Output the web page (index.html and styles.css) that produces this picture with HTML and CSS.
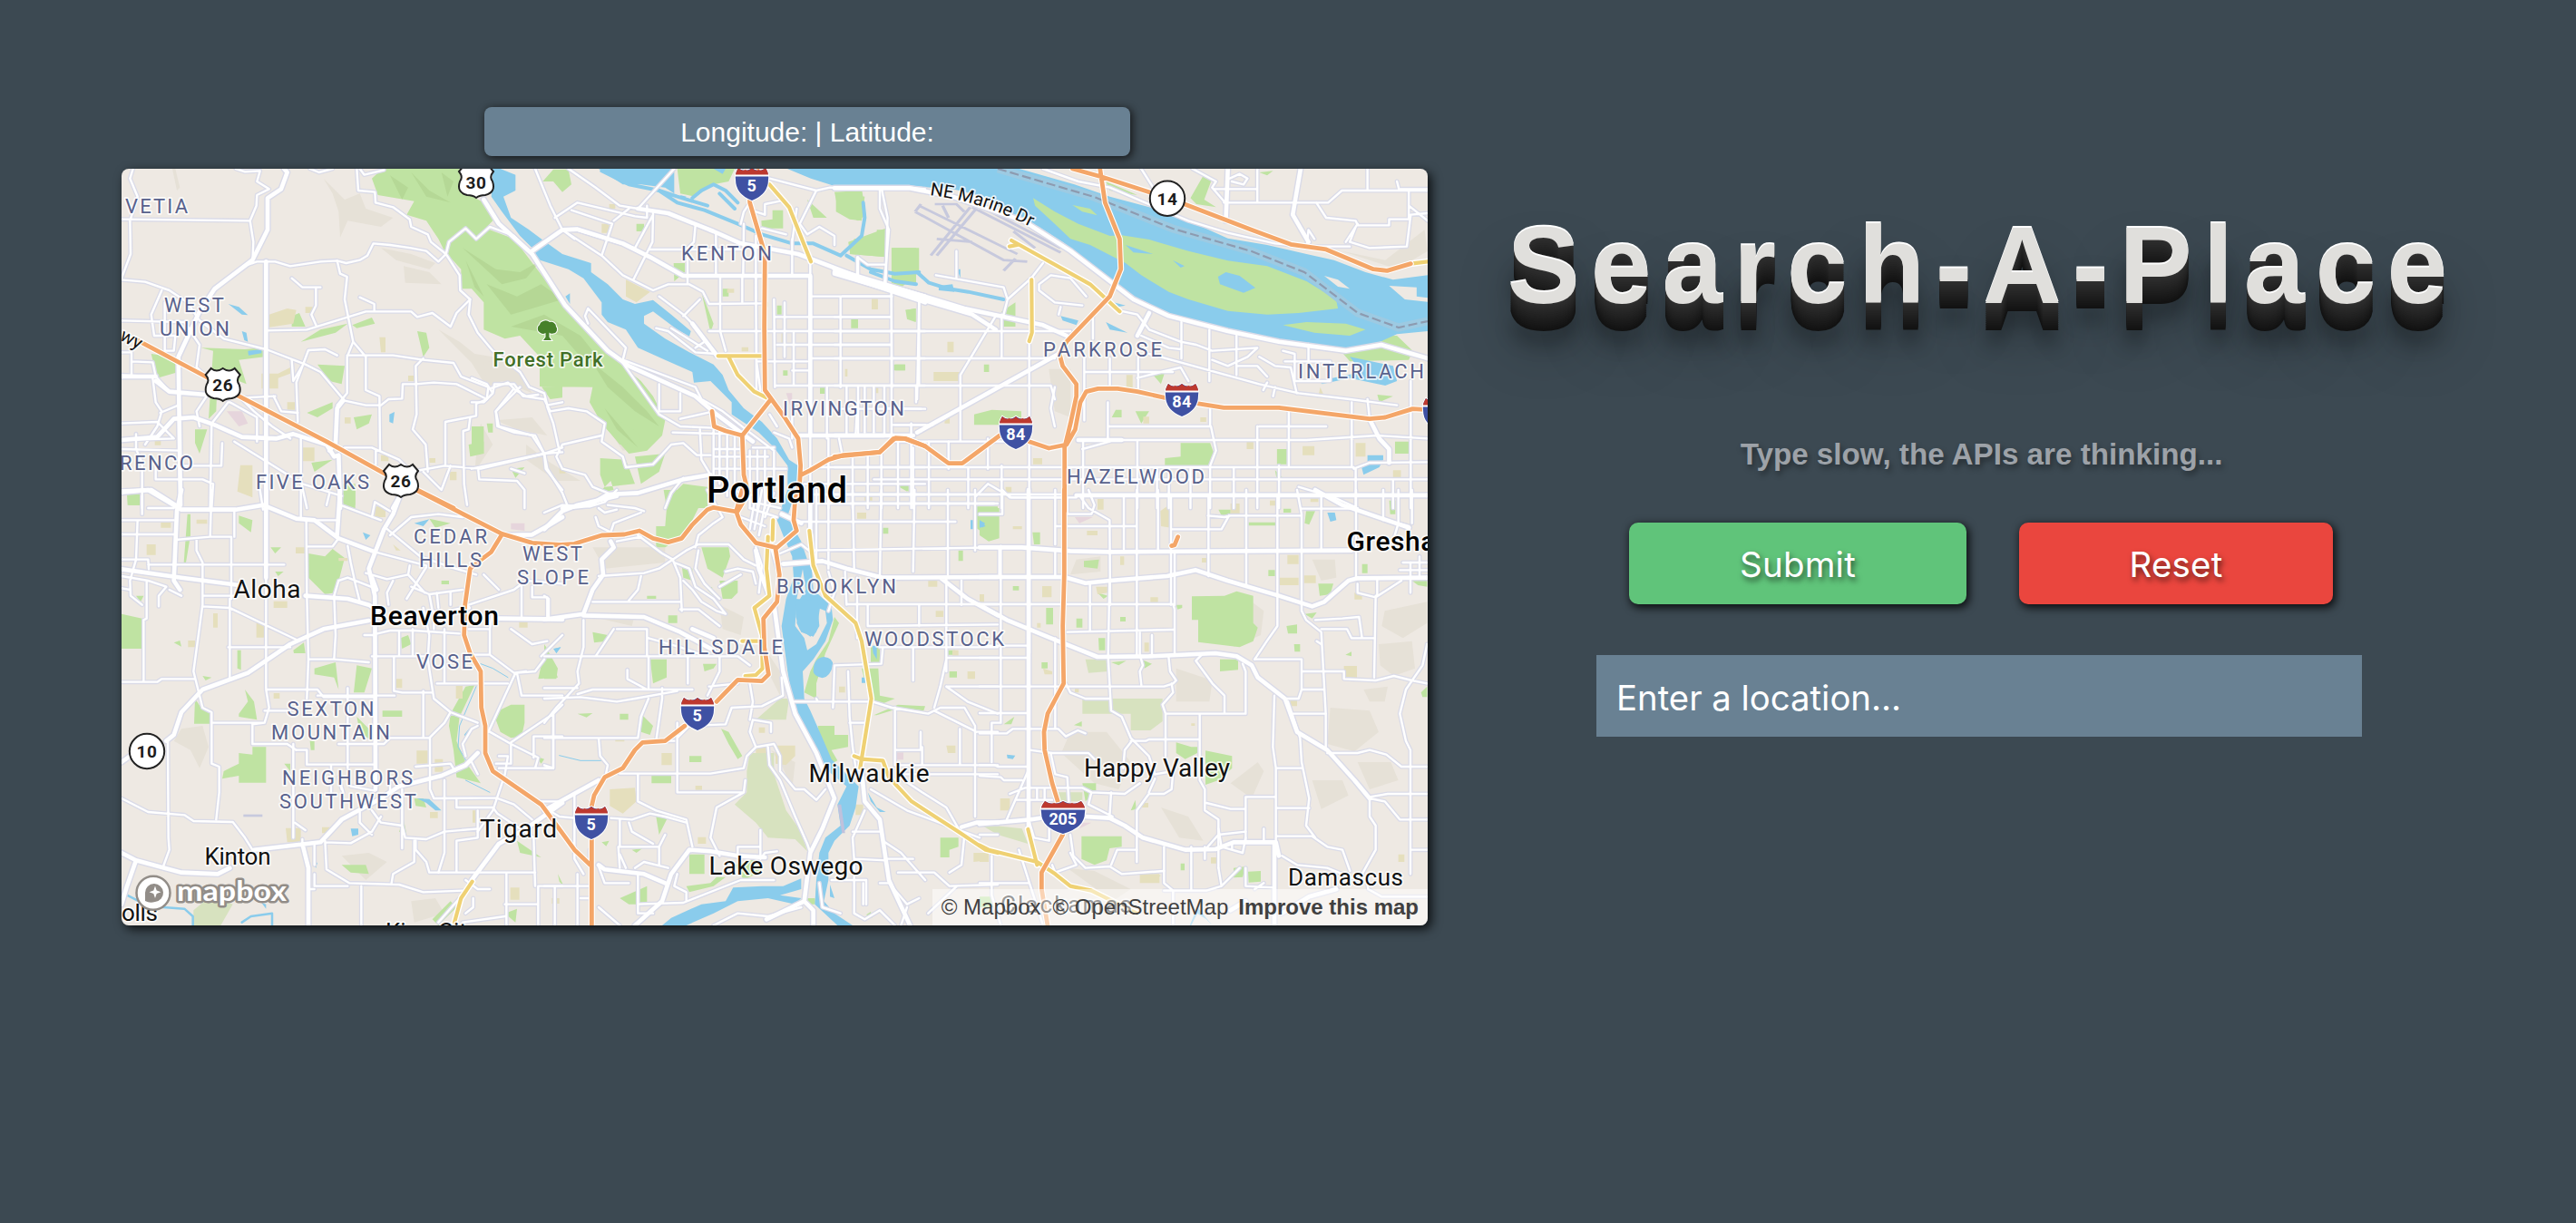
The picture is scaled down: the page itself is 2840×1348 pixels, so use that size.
FILE: index.html
```html
<!DOCTYPE html>
<html lang="en">
<head>
<meta charset="utf-8">
<title>Search-A-Place</title>
<link rel="stylesheet" href="styles.css">
</head>
<body>
<main class="page">
<section class="map-column">
<div class="coordinates">Longitude: | Latitude:</div>
<div class="map">
<svg class="map-canvas" viewBox="134 186 1440 834" role="img" aria-label="Map of Portland">
<defs>
<g id="minor" class="net">
<g transform="translate(120 100) scale(.33333)">
<path d="M80,258 70,290 95,350 70,430 72,540 42,620M42,425 465,430M420,258 450,268 500,265 490,300 530,325 490,345 488,380 467,430 478,500 475,570M42,625 120,632 200,660 260,700 300,760 380,820 520,855 650,905 700,930 780,1025 850,1040 900,1040 925,1020 970,1018 972,970 1015,970 1075,965 1150,970 1250,1020"/>
<path d="M445,580 490,565 550,565 600,580 700,565 755,562 785,570 830,560 855,545 875,505 930,510 1000,520 1050,530 1090,565 1115,540 1160,610 1162,660 1195,690 1190,740 1220,800 1270,860 1360,930 1390,980 1440,1000 1450,1040 1500,1030M1115,540 1125,500 1180,455 1215,490 1260,450 1340,480 1390,530M820,258 825,330 880,335 882,370 940,385 995,425 1000,450 1055,475 1065,500 1115,540M665,258 695,270 740,258M830,258 845,278 910,262"/>
<path d="M755,562 765,605 788,615 780,690 808,830 788,880 788,1000 755,1040M520,793 655,790 850,730 1000,730 1020,748 1070,735 1130,780 1150,735 1195,690M605,620 640,650 700,650M685,655 685,710 670,740 685,775M830,683 878,705 878,725M808,830 850,880 850,990 895,1010 897,1190M788,875 940,875 1040,890 1140,900 1165,945 1255,980 1250,1020 1215,1035 1215,1075 1113,1095 1113,1235M755,875 715,855 660,858 620,965 625,1095M1040,885 1015,910 1018,1070 1005,1120 1048,1170 1055,1260M605,890 610,960 640,910"/>
<path d="M42,760 250,765 300,840 290,915 340,960M42,865 75,865 75,940M75,895 145,898 155,945 42,940M155,945 200,995 330,1005M175,660 140,740 150,810 220,810 215,860 185,860 185,700M145,950 155,1030 175,1060 160,1110 120,1170M42,1100 160,1095 215,1150 42,1155M170,1065 230,1040M300,1110 290,1060 330,1000M395,1030 340,1100 335,1380M400,1030 490,1080 490,1160M430,1010 480,1060 540,1110 600,1150M42,1185 235,1190M90,1135 90,1185 110,1230 110,1380M415,1160 560,1250 640,1300 770,1340M375,1165 372,1240 235,1240M155,1240 155,1285 310,1285 345,1300 340,1380M635,1150 635,1290 655,1380M780,1180 870,1180 960,1220 1000,1260 1110,1240 1230,1250 1440,1200 1500,1195M1195,1080 1190,1120 1172,1125 1175,1300 1185,1370M1130,1240 1100,1320 1040,1260M883,1190 883,1235M545,1010 570,1060 625,1065M450,1015 550,1010M1340,985 1280,1060 1285,1110 1340,1130 1410,1140 1440,1200 1445,1250 1500,1320M1222,1255 1225,1285 1350,1290 1375,1320 1375,1380M1260,985 1320,965 1345,990 1380,1010 1420,1005M1450,1045 1470,1100 1490,1190"/>
</g>
<g transform="translate(520 100) scale(.33333)">
<path d="M210,258 260,380 300,460 430,545 500,610 600,660 650,640 720,640 765,665 785,705 970,703M320,258 410,320 490,380 550,390 670,258M275,420 350,370 540,415 580,420 580,380M330,395 465,440 430,545M300,460 340,490M345,460 540,520 600,410M470,430 520,390M740,445 735,500 715,520M600,405 598,500 535,625M590,525 900,525M808,470 808,612M714,520 714,640M900,440 898,612M940,480 940,690M1060,490 1060,612M1075,390 1060,500M890,440 900,400 920,370M985,290 1140,330 1185,320 1350,322 1450,320 1500,325M1140,330 1085,440 1110,475 1150,450 1200,480 1200,510M1350,325 1350,390 1380,460 1365,640M1275,610 1275,550 1310,575 1365,575M940,400 970,410 970,375 1020,365M960,455 1040,475"/>
<path d="M822,612 822,790M895,612 895,700M940,612 942,990M1000,690 1003,980M1035,700V880M1065,800 1065,975M1120,565V1380M1220,680 1220,980M1388,650 1390,980M1480,700V970M1120,680H1390M1005,748H1388M822,795H1500M1010,840H1388M1120,885H1500M1060,925H1112M1003,975H1500M942,895H1110M1175,980V1150M1240,980V1140M1300,980V1130M1365,980V1140M1470,980 1470,1030M1400,1105H1500M1275,1050 1270,1140M1060,1050 1060,1150M785,795 822,795 840,860M942,795 942,895 955,990M1375,1050 1500,1052"/>
<path d="M385,720 510,850 500,890 740,980 760,1020 830,1060 920,1130 1000,1190M385,720 375,745 385,770M620,680 700,740 730,770 810,870M700,745 755,690M610,785 650,795 740,865 810,870M660,785 780,860M740,850 770,830M500,900 620,1070 690,1110 800,1115M620,970V1060H690V1000M690,1085 800,1060M665,1130 860,1135M755,1120 760,1220 790,1270M800,1185H890M800,1210H980M800,1250H1040M800,1120V1300M820,1120V1300M845,1120V1340M870,1120V1340M920,1190V1380M945,1190V1380M970,1190V1380M1000,1190V1300M930,1180H1000M1120,1245H1500M1100,1300H1500M1130,1335H1500M1180,1150V1380M1215,1150 1225,1200M1260,1210V1380M1310,1200V1380M1355,1190V1380M1410,1150V1380M1460,1180V1380"/>
<path d="M0,950 50,970 70,1000 40,1030 0,1030M70,1000 75,970 140,970 170,1010 240,1020 260,1060 320,1050 380,1060 440,1100 430,1160 500,1210 510,1245 600,1235 660,1170 700,1165 745,1205 790,1205M430,1140 300,1170 280,1210 300,1250 375,1270 400,1310 450,1330M0,1250 240,1200 300,1180M160,980 80,1060 90,1110 200,1140 240,1200 250,1250 300,1330 320,1380M130,1250 175,1265M700,1280 660,1330 640,1380M1000,1130 1050,1150 1060,1180M985,1070 1010,1110"/>
</g>
<g transform="translate(920 100) scale(.43367 .33333)">
<path d="M530,258 620,300 700,320 790,370 900,430 1000,470 1120,505 1200,515 1310,515M780,258 810,320M910,258 970,300 960,320 990,365M965,325H1075V258M1075,325V370M990,370H1255L1290,330H1508M1355,258V330M1225,370 1250,420 1325,430 1330,445H1410V425H1460V330M1325,450 1310,500 1360,520 1455,515 1465,410 1508,405M1430,300 1435,325 1508,325M1005,290 1030,275 1050,290 1040,310 1010,300M1460,380 1508,430M1200,520 1205,460 1220,490M1330,440 1300,500"/>
<path d="M60,550V610M120,325 135,420 130,640M258,610 430,650 440,690 430,740M310,530V620M440,690 500,620 530,570M520,640 520,660 560,700 630,710M520,640 550,610 600,620 640,680M575,715 570,740M145,670V1150M215,700 210,1020M20,680H145M0,748H145M0,795H600M0,840H145M0,885H560M0,975H500 550L560,1020M60,980V1140M100,980V1130M0,1052H220M145,1105H250M145,1130 148,1160H500M320,940V1160M425,740V880M412,740 320,940M495,830V1380M657,740V820M635,880V1090M700,885V985M772,880V990M635,930H860M882,765V885M953,790V960M1022,810V940M780,810 850,850 882,855M735,730 770,740 800,790 880,830 920,840 960,860 1075,850 1050,880 1000,910 960,890M1022,910H1075L1100,945M770,950 830,930 880,915 900,960M800,870 1080,970 1180,1000 1310,1020 1430,1040M1100,965 1090,990M1120,980 1115,1010M1205,840V890M1145,895H1260V960H1170V870L1140,860M1080,880 1120,910 1160,915 1175,1000"/>
<path d="M695,1030V1150M695,1110H955V1050M957,1110 970,1190 955,1240M1080,1110H1250M1075,1110 1075,1380M1155,1050V1240M1315,1030V1240M1355,1020 1360,1080M1465,960V1380M635,1155H1080 1200L1380,1140 1508,1150M770,1155V1380M632,1160V1380M390,1250V1150M195,1100V1380M240,1160V1380M290,1160V1250M340,1250V1380M425,1240V1380M0,1245H1320M100,1285H1508M0,1335H350M630,1335H1508M390,1300 450,1345H580M360,1340 390,1300M820,1250V1380M850,1250V1380M905,1250V1380M955,1250V1380M1015,1245V1380M1130,1240V1380M1180,1310 1270,1345 1330,1380M1325,1250 1325,1380M1320,1250 1360,1230 1508,1228M1420,1290V1380M40,1365H405M630,1185 700,1160M560,980 550,1050 560,1110"/>
</g>
<g transform="translate(120 540) scale(.33333)">
<path d="M42,100H215M42,147H215M95,100 90,230 70,300 72,350 110,380M130,60H215M42,230 130,230 132,262M110,20V80M340,0 335,155 220,165M415,65V155M335,155H405V360M290,165V200L310,240 310,380 280,600 310,720 340,735 340,905 365,915 365,1000 355,1090M130,247H580M165,385V350L190,320 130,300 42,285M42,325 70,330M125,300V425L115,430V635M42,635H160L175,625H285M310,350H415M200,330 240,350M310,385 400,390 620,495M400,360V625M395,520H600M520,80V660L530,720 515,770H340M520,660H690L710,685H880M515,730H600M475,770V840H590L620,860M515,770 475,775M635,0V95M653,100 655,350 660,560 655,690M660,187H740L760,160M790,185 800,240 815,310 830,370M745,350 760,300 790,290 880,325M690,100H760M510,65 500,0M720,50 730,10M765,50 900,100M870,90 880,40 930,70M915,125 1030,220 1130,255 1215,280M880,205 1050,250M930,150 1000,90 1090,80 1170,90M850,275 920,295 990,280 1045,340M990,280 995,250M940,300 920,340 925,380M1050,255 985,360M1000,320 1060,345 1170,330M1085,340 1090,390M1130,340V380M1060,345 1070,400"/>
<path d="M1190,380 1340,330 1380,300 1500,310M1240,280 1290,330M1365,310V420M1400,320V355H1450V420M1190,460H1260L1270,400M1260,460V545L1340,605 1380,600M1190,545H1260M1430,550 1500,480M1330,460 1400,510 1450,500M1440,560 1410,600 1350,605 1365,680H1500M1345,605 1255,800M1085,640H1320M1040,390 1060,480 1055,560 1075,690 1130,735 1220,770M960,470V545M1005,460V545M845,480H880M888,475 930,465 1010,465 1160,475M1075,460V400M1110,460V635M870,550H1010 1055M943,550V665L970,670H1070M1040,665V820M690,680H945M660,560 745,560 860,570M745,350 750,480 745,560M790,655V920M620,860H655V908H880M610,840V1150M735,910V1000M760,840H910L930,820H1060L1110,770 1130,735M1062,820V990L1075,1020 1285,1018M1110,960V1200L1090,1265M1015,915 1130,905 1145,930M1280,905H1330V840M1260,800 1330,840 1420,885 1410,920 1290,920M1330,835 1470,740 1500,710M1405,885 1405,815H1500M1470,740V920H1410M1290,880 1320,880 1310,940 1270,1060 1220,1130"/>
<path d="M1200,900 1220,940M1180,880 1170,840 1200,790 1220,780M1150,1025V1050H1270L1285,1070 1405,1150 1410,1310M1220,1060 1220,1150 1150,1160V1265M1285,1020 1340,1040 1400,1090M1410,1030H1500M970,990V1185M870,1060 900,1100 970,1110 980,1150 1050,1155 1110,1130 1220,1120M1015,1160 1015,1190 1050,1230 1060,1265H1410M1010,1160V1230L940,1270 935,1300M640,1155V1180M680,1170V1240M715,1160 720,1255 795,1300 960,1305 1040,1330 1170,1325M715,1165 800,1168 870,1130 900,1080M680,1270V1310H790M835,1310V1440M660,1320H680M830,1065 830,1100 870,1140M42,1020 130,1065 250,1075 280,1095 410,1098 450,1150 475,1190M195,830 197,1150 200,1190 180,1245M615,1100 650,1125M775,1000 760,950 770,990M800,980 880,995M930,960V1000M1315,1270V1440M1310,1370H1420M1420,1310 1420,1440M1420,1310H1500M1205,1350V1380L1180,1400M1180,1290 1220,1320 1260,1320M1170,1430 1310,1410M1090,1430 1160,1350"/>
</g>
<g transform="translate(600 540) scale(.33333)">
<path d="M0,75 60,50 150,55 200,40 240,0M180,60 200,75 240,65M170,90 180,120 220,140 230,110 320,75M210,50 300,60 330,70M240,170 320,155M310,150 390,210 425,230 470,200 510,180 610,180 660,230 700,250M425,230 380,260 330,275 180,285M425,230 450,290 455,400M430,240 480,260 500,320 560,360 600,410 570,400 520,370 490,330 460,300M510,200 500,260 530,310 580,360M540,0 590,90 560,110 510,150 500,190M600,270 640,260 690,270 700,310M580,320 650,280M160,370H450M320,285 310,330 280,365M0,350 15,360V420M450,395H510L580,450M0,550H640L680,580M130,430 130,520 110,600 115,640 40,720 0,770M240,460H340V550M345,490 450,520 520,545M475,550V640M170,550 230,460M345,550V660M0,655H110M110,675 160,660H490M0,690 120,685 240,700 300,690 440,665M390,655V690L370,830M275,595V625L340,660M580,550V600L540,680M545,650 640,640M0,820 100,820 180,820 185,880 210,910 200,960M30,740V920H0M150,820H310L320,750 345,690M0,910 30,920"/>
<path d="M440,770V1000H660L665,960M250,938H550L660,920 670,880 700,850 680,800 690,760 750,770V800M310,940V1030L370,1060 470,1090 490,1180M440,820 480,780 600,775 620,720 720,715 790,680 785,620M680,640 690,700 680,760M700,850 760,840 780,880V930L830,990 860,990 900,1025 930,990M740,850 745,910 780,960 830,1080 870,1170 880,1200M370,830H430M220,1085 290,1090 350,1070 400,1080 470,1100M280,1100 290,1130 360,1170M250,1090V1180H380L400,1140M245,1180 250,1250M660,1000 570,1050 550,1150 580,1210M715,1125V1220M640,1180H710M640,1180V1215M715,1220 730,1200 770,1195M100,1010V1220L130,1270M0,1050 50,1080 100,1085M0,1310H150M110,1270V1440M35,1310V1440M120,1350H150M180,1380 250,1440M180,1245 200,1300 280,1300M250,1205 270,1250M300,1250 330,1230 410,1250M310,1270V1400H360M310,1370 460,1365 650,1290 760,1290M440,1270 430,1310 470,1330 470,1360M560,1440 640,1400 740,1410 850,1380M150,1190V1235M380,1180 380,1240"/>
<path d="M780,210 850,180 900,220M900,0V240M940,0V260M1020,0 1025,260M1115,0 1110,290M1225,0 1220,270M1335,0V280M1425,0V200M900,45H1500M840,105H1360M880,200 1500,190M900,15H1500M940,270 960,340 940,400M995,270 1000,380M1035,290V490M1070,380V450L1500,445M1000,378H1500M1240,380 1240,450M1330,290V600M1380,300V380M1110,520H1500M1220,520V630M1330,560 1310,650 1290,720M1120,520 1115,575 960,580 955,720M1330,555H1500M1085,700 1150,720 1270,740 1310,720 1390,720 1425,780V1080M1330,650H1500M1330,650 1400,700 1500,740M820,700H1080M1005,600 1010,750 1020,850 1035,950M1010,770H1060M900,690 905,700M1160,720V860H1245V800M1250,850V910M1160,910H1500M1430,800H1500M1290,730 1430,800M1375,790V910M1160,860 1160,910M1190,960 1250,1000 1330,1050 1370,1120M1180,940H1500M1080,990 1200,1060 1440,1150M1060,1060 1020,1150 1025,1220 1130,1225M1020,1130H1110M1025,1220V1400L1060,1420 1110,1390 1160,1440M950,1290H1065V1370M1055,1300V1370M1120,1160 1180,1200 1260,1290M1130,1220H1220M1170,1265H1290L1340,1310 1500,1305M1365,1310 1270,1400M1140,1300 1200,1370 1240,1350M1200,1380 1180,1440M1110,1300 1140,1300M1390,1140 1380,1240 1340,1265M1440,1140 1500,1140M910,1300 920,1380 980,1400"/>
<path d="M620,0 700,20M680,60 770,90M690,40 780,60M700,10 680,130M720,0 695,130M740,0 710,150M760,10 730,90M650,90 730,120M700,190 720,250 710,340M750,190 770,260"/>
</g>
<g transform="translate(1080 540) scale(.33333)">
<path d="M0,80H75V0M70,185V540M0,15H270M75,0 100,25H320M165,200V540M65,190V290M0,378H640L645,395V540M250,0V180M255,120H520M0,45H50M290,25V80H370L380,50 360,0M335,25 360,60 430,100 432,380M477,25V195M520,0V550M590,0V200M633,25V380M635,130H800L825,85M755,85 810,90 830,85H1060M757,25V285M882,0V320M985,25 985,450 950,500 910,560M1050,0 1065,80 1065,400 1080,430 1130,470 1145,740 1145,855M1130,20 1130,200M1065,62H1230M1245,0V290M1335,0V100M1385,0V110L1370,160M1430,0V110M1385,110 1420,120M1300,20H1480M1400,240H1480M1390,265H1480M1455,220V290M250,290V200M645,205V380M365,305V465M430,300 425,550 435,730 470,750 500,820 560,880 580,940M290,470 640,462M530,470V545L540,580 530,600 535,645M570,480V545M0,515H165M0,555H165M0,650H610L640,640 650,630 630,600 625,550M635,640 640,670 605,710 615,740V880M0,738H155M70,400V650 770H40V900M0,805H90L110,790H260L285,815 325,795 350,805M285,640 300,670 350,690H430M250,490V790M650,545 770,540M735,545 715,565 770,640 810,680V740M615,740H880V600L870,575M728,740V960L745,990V1060L790,1090V1250"/>
<path d="M910,560H1065V660L1055,690 1015,690M1065,600H1205V625L1310,630 1370,615 1430,630 1480,640M1065,660H1140M1030,740H1145M1115,500 1130,510M1110,430 1200,425 1255,420 1265,490M1130,460H1215L1230,490H1305M1310,350 1305,620M1250,310 1250,340 1310,355 1395,300M1315,295V350M1425,240V340M1480,510 1465,580 1410,660 1390,740 1410,830 1425,860V1270M1150,870 1250,870 1290,860 1345,875 1395,915H1480M1290,1020 1340,1030 1390,1090H1480M1290,1015 1350,1005H1480M1290,1020V1080L1310,1110V1190L1265,1270M1430,1190H1480M980,920H1065M985,1145 1100,1145 1150,1180 1200,1190 1225,1260M980,1052H1090M880,1160V1015H980M750,1035 830,1055H880M975,680 970,850 980,920V1160M1020,700 1060,820 1065,900 1090,1020 1080,1110 1110,1150M500,830H550L560,825H725M500,835 480,860 475,920M580,940 640,930 635,990 610,1005H560L520,1060V1230M580,955 560,1000M435,1000 430,1080M370,1000 480,1005 530,970M370,1000 360,1040 440,1080M90,1090 160,930M0,910H50L60,915H155M0,945 70,950 80,960H140M100,1005 150,985H340L370,1000M120,1025H240M190,990V1020M215,990V1020M235,870 250,940 290,950 295,1030M165,860 240,870H360L380,890M165,1100 180,1150 230,1160V1100M300,1140 310,1210 350,1250 430,1245 470,1270 610,1260"/>
<path d="M520,1190H455L435,1240M610,1180V1300L640,1325V1440M640,1325H750L800,1310 790,1250M700,1180V1320M745,1180V1220M750,1185 790,1140 880,1130M790,1120 800,1180 870,1200 880,1150M940,1120V1165M835,1165V1190M610,1325 640,1325M880,1250V1310L975,1315M1000,1210 1050,1240 1150,1250 1250,1290M910,1320 940,1300M130,1190 165,1300 210,1440M0,1300H165M40,1210V1340L70,1440M300,1200 320,1240 250,1265 240,1240M1280,1280 1285,1320 1330,1345H1480M800,1310 860,1250"/>
</g>
</g>
<g id="major" class="net">
<path transform="translate(120 100) scale(.33333)" d="M580,258 590,270 570,325 525,355 525,460 475,560 350,655 300,730 230,880 237,1370M520,565V1380M42,1155 160,1145 215,1085 280,1080 350,1105 440,1145 555,1150 610,1135 720,1170 745,1210 760,1205 765,1380M775,1025 755,1050 750,1165 730,1190M155,945 42,945M155,960 200,995 320,1005M960,1345 940,1380M42,1325 140,1320 220,1370"/>
<path transform="translate(520 100) scale(.33333)" d="M40,360 90,440 200,540 310,710 450,860 520,910 740,1010 810,1070 930,1160M200,530 300,460 350,458 500,505 590,550 700,612 1120,612M550,390 650,405 800,465 890,505 1080,540 1290,620 1500,680M1200,600 1500,700M730,770 810,875M1120,612V1140M1085,1140H1365M300,1380 390,1370 450,1335 550,1330 700,1285 790,1270"/>
<path transform="translate(920 100) scale(.43367 .33333)" d="M0,322H190L300,350 480,430 600,530 760,690 850,745 1000,795 1130,830 1300,860 1390,840 1508,885M0,590 140,645 330,720 530,775 590,810M0,605 350,740 410,790M0,1140H200M210,1130 570,870M620,1155H730M1185,258 1165,410 1205,500M1000,258 995,430M1360,1085 1385,1150 1410,1185 1410,1230M800,735 770,810"/>
<path transform="translate(120 540) scale(.33333)" d="M42,8 130,0 240,65 420,65 510,50 620,95 680,100 760,160 880,205M240,0 225,70 215,300 235,330M520,0V290M765,0 755,150M970,0 940,80 910,130 860,260 880,350 882,990M42,262 240,290 430,315M650,350 790,360 860,380 890,400M860,432 710,460 600,510 460,605 310,660 240,735 215,810 190,830M70,880 42,900M1190,390 1140,400M1290,425 1500,428M1220,870 1180,910 1100,945 960,980 900,1020 770,1090 700,1165 480,1190M1500,1035 1380,1120 1290,1170 1200,1290M1300,150 1400,148 1450,120 1500,90M42,1200 90,1225 240,1265 360,1270 400,1250M90,1225 60,1310 42,1370M640,1170 660,1250V1440M870,290 885,330"/>
<path transform="translate(600 540) scale(.33333)" d="M0,130 60,70 110,50 240,20M220,170 230,190 190,230 195,280 160,330 130,410 0,428M130,415 330,420 450,470 560,530M560,490 490,460M760,380 790,600 830,740 900,870 960,1020 920,1120 880,1200 860,1360 735,1420M790,245 920,235 1000,260 1120,290 1500,288M880,0V140M1310,290 1400,360 1500,415M0,1060 180,960M180,1240 200,1255 330,1270 400,1300M300,1440 390,1360 420,1270 480,1190 550,1195 640,1210 730,1215M1050,930 1060,1030 1110,1090 1140,1290 1210,1440M860,1360 890,1390V1440M700,200 710,260 740,340M1380,1115 1430,1100 1500,1100M785,80 850,110"/>
<path transform="translate(1080 540) scale(.33333)" d="M0,190 140,190 300,202 430,205 1230,200M0,288H280L350,308 430,300 620,285 715,265 820,300 990,350 1100,385 1140,370 1220,300 1250,292 1480,290M0,380 90,430 260,500 390,552 560,550 780,540 850,550 900,580 920,620 1010,690 1050,800 1150,860 1240,960 1290,1020M162,0V1120M0,1105 170,1090 200,1085M350,1080 430,1085 480,1110 540,1150 680,1190 780,1188 840,1165 980,1165 990,1210M975,1165V1440M320,18 1480,18M1110,0 1200,50 1420,125M1000,1400 1090,1345 1180,1320M830,1390 880,1360"/>
</g>
<g id="trunk" class="net">
<path transform="translate(520 100) scale(.33333)" d="M985,310 1050,385 1122,565M815,877H960M850,880 880,940 935,995 985,1020"/>
<path transform="translate(920 100) scale(.43367 .33333)" d="M450,495 650,640 725,730M445,515 465,510M501,625 502,800 495,828M1465,572 1508,565"/>
<path transform="translate(600 540) scale(.33333)" d="M740,155 735,260 745,350 695,390 720,480 722,590 700,612 665,615M655,500H710M757,100 755,165M877,135 890,250 930,350 1030,440 1050,500 1082,690 1045,920M1025,880 1050,890 1120,895 1140,950 1215,1030 1370,1130 1460,1190 1500,1200"/>
<path transform="translate(1080 540) scale(.33333)" d="M0,1175 30,1190 190,1230 250,1270 300,1310 370,1325 430,1355 520,1400M160,1122 190,1240"/>
<path transform="translate(120 540) scale(.33333)" d="M1202,1295 1165,1350 1143,1430"/>
</g>
<g id="motorway" class="net">
<path transform="translate(120 100) scale(.33333)" d="M85,820 320,945 430,1010 720,1160 910,1265 1020,1320 1140,1380"/>
<path transform="translate(120 540) scale(.33333)" d="M1020,2 1300,145 1400,175 1500,182M1300,148 1265,205 1225,235 1195,260 1178,380 1175,480 1195,540 1230,600 1232,720 1245,780 1245,870 1270,930 1430,1040 1500,1135 1540,1190 1592,1240"/>
<path transform="translate(520 100) scale(.33333)" d="M945,258 918,330 920,370 970,540 968,780 970,990 1035,1080 1080,1150 1088,1240 1085,1300M990,1020 895,1140 900,1270 915,1330 880,1390M795,1060 802,1110 840,1125 895,1140M1090,1270 1120,1255 1180,1220 1230,1205 1350,1195 1395,1150 1430,1150 1500,1175"/>
<path transform="translate(600 540) scale(.33333)" d="M0,185 100,178 190,150 265,147 315,135 360,160 410,173 455,160 490,115 540,65 560,58 635,72 650,115 700,175 765,190M655,0 635,70M845,-20 830,30 825,100 835,135 765,195 778,280 770,370 725,425 728,520 742,610 720,632 640,628 570,700M465,780 400,830 325,835 300,860 260,920 200,950 165,1010 157,1045M157,1155V1440"/>
<path transform="translate(920 100) scale(.43367 .33333)" d="M0,1210 115,1195 155,1148 180,1150 230,1175 290,1232 325,1232 420,1140M495,1160 545,1182 590,1170 612,1120 625,1030 640,995 670,985 720,985 770,995 840,1015M925,1035 990,1048 1130,1048 1360,1085 1400,1080 1470,1052 1508,1055M675,258 688,370 725,490 728,590 700,680 590,830 572,870 580,910 615,970 615,1010 600,1100 585,1180V1390M605,258 680,285 800,335M890,375 1000,430 1060,460 1160,508 1250,525 1370,590 1405,595 1465,572"/>
<path transform="translate(1080 540) scale(.33333)" d="M280,0 280,280 275,450 278,640 225,740 213,800 215,860 240,970 262,1040M275,1140 205,1265 205,1320 225,1440M635,185 645,182 656,155"/>
</g>
<g id="interstate"><path d="M-15,-18Q-8,-12 0,-18Q8,-12 15,-18Q19,-12 18,-5Q18,11 0,18Q-18,11 -18,-5Q-19,-12 -15,-18Z" fill="#3f51a3" stroke="#fff" stroke-width="2" paint-order="stroke"/><path d="M-15,-18Q-11,-14 -7.500,-16Q-3,-14 0,-18Q3,-14 7.500,-16Q11,-14 15,-18Q18,-13 18,-10H-18Q-18,-13 -15,-18Z" fill="#bd392f"/><path d="M-18,-9.5H18" stroke="#fff" stroke-width="2"/></g>
<path id="us" d="M-13,-18Q-7,-13 0,-18Q7,-13 13,-18L19,-11Q14,-5 18,0Q22,12 10,15Q4,15 0,18Q-4,15 -10,15Q-22,12 -18,0Q-14,-5 -19,-11Z" fill="#fff" stroke="#222" stroke-width="2"/>
<path id="marine" d="M1025,215Q1082,222 1136,250"/>
</defs>
<rect x="134" y="186" width="1440" height="834" fill="#eee9e3"/>
<g class="shade">
<path transform="translate(120 100) scale(.33333)" d="M710,290 740,340 760,400 765,485 790,430 900,450 940,420 850,390 830,340 780,360ZM900,520 1000,540 1080,570 1060,590 950,560ZM975,580 1060,600 1100,640 980,635ZM1090,790 1160,830 1210,870 1270,880 1350,930 1400,1000 1300,960 1250,980 1200,900ZM210,258 225,330 235,320 220,258ZM1280,1090 1400,1080 1450,1140 1350,1120ZM1230,1100 1270,1170 1210,1260 1220,1150Z"/>
<path transform="translate(520 100) scale(.33333)" d="M180,1170 260,1230 360,1290 280,1290 180,1220ZM40,900 130,880 180,960 50,960ZM440,1100 560,1100 600,1170 500,1190Z"/>
<path transform="translate(600 540) scale(.33333)" d="M160,190 400,190 400,240 200,260ZM580,380 660,420 650,480 590,460ZM740,540 780,600 780,680 750,620ZM120,410 300,410 290,450ZM750,860 830,900 820,990 790,920Z"/>
<path transform="translate(920 100) scale(.43367 .33333)" d="M545,920 600,920 600,1080 560,1060ZM1290,530 1400,560 1500,460 1508,530 1430,590Z"/>
<path transform="translate(120 540) scale(.33333)" d="M240,790 310,780 330,850 300,920 270,860 215,830ZM770,1210 860,1200 920,1230 850,1290ZM1000,1360 1080,1350 1110,1400 1010,1430Z"/>
<path transform="translate(1080 540) scale(.33333)" d="M320,230 400,220 400,270 300,280ZM1100,230 1175,230 1180,290 1130,300ZM1340,400 1480,370 1480,440 1400,490 1330,450ZM1320,510 1430,500 1440,590 1370,615 1325,580ZM1160,720 1290,730 1320,800 1240,865 1150,840ZM1250,900 1360,900 1385,960 1290,990ZM1100,960 1200,960 1220,1010 1130,1055ZM600,1050 690,1080 740,1160 660,1150ZM830,970 920,900 940,930 900,1020ZM650,590 770,630 760,700 650,700ZM300,800 420,800 500,900 460,990 380,970 270,870ZM290,1250 380,1260 500,1320 440,1360ZM1270,660 1350,650 1340,700 1290,700ZM900,370 940,400 930,480 840,520Z"/>
</g>
<g class="soft-park">
<path transform="translate(600 540) scale(.33333)" d="M680,870 760,870 760,940 800,1060 850,1130 870,1195 830,1155 740,1150 700,1100 630,1040 670,1000 670,930ZM700,760 780,690 810,690 800,760Z"/>
<path transform="translate(1080 540) scale(.33333)" d="M340,690H605V765L565,795H500V740H340ZM350,560H425V600L360,605ZM0,1105 140,1120 160,1170 60,1140ZM250,1000H340V1030H260Z"/>
<path transform="translate(120 540) scale(.33333)" d="M280,1390 340,1340 410,1370 370,1440H280Z"/>
</g>
<g class="park">
<path transform="translate(120 100) scale(.33333)" d="M905,258H1160L1165,330 1240,370 1270,430 1215,485 1260,460 1340,490 1500,700 1580,790 1700,910 1760,960 1800,1010 1840,1090 1830,1140 1780,1190 1720,1200 1630,1100 1590,1030 1600,980 1425,978 1425,880 1360,810 1310,820 1240,790V700L1200,655H1165V590L1110,530 1090,490 1050,430 985,410 1010,365 890,345 870,290ZM1425,970 1500,970V1015L1460,1020ZM305,850 450,855 510,850 515,880 430,890 455,970 430,960 420,920 360,925 355,1060 330,1085 345,860ZM140,870 210,880 230,930 160,950ZM605,745 630,735 650,780 605,780ZM635,830 700,790 790,770 750,800ZM805,775 870,750 880,770 820,785ZM1020,795 1050,800 1060,850 1040,880ZM690,905 780,910 770,970 730,960ZM655,1065 740,1030 740,1050 690,1080ZM810,1080 870,1070 860,1100 820,1120ZM285,1120 325,1120 300,1200 285,1165ZM1190,1170 1240,1160 1240,1200 1195,1210ZM65,1330H110V1370H65ZM770,1300H815V1380H770ZM670,1230 740,1220 680,1260ZM1250,1100H1270V1130H1255Z"/>
<path transform="translate(520 100) scale(.33333)" d="M235,300 270,260 320,260 330,310 300,335 270,300ZM680,258H870L850,300 800,310 740,350 690,340ZM1205,335 1300,350 1290,430 1250,425 1205,400ZM1265,490 1340,485V460H1370V550L1250,540ZM1390,520H1470V640H1390ZM958,430 995,425 995,395H1030V455H960ZM760,665 800,770 790,800ZM830,655H850V680H830ZM1010,710H1025V740H1010ZM1255,755H1278V785H1255ZM1435,725 1468,720V765L1440,755ZM668,570H705V600L670,630ZM1110,360 1175,420 1130,420ZM1395,905H1433V925H1395ZM1152,980H1178V1002H1152ZM395,1030 470,1080 550,1130 560,1160 490,1170 440,1110ZM425,1215 510,1220 540,1300 440,1310 425,1270ZM640,1360 700,1300 780,1310V1380H650ZM420,1330 470,1320 460,1290ZM1400,1300 1445,1295V1325ZM540,1210 640,1200 620,1260 560,1300ZM545,440H570V465H545ZM0,1110H40V1200H0ZM1030,925H1045V942H1030ZM130,1250 175,1245 145,1280Z"/>
<path transform="translate(920 100) scale(.43367 .33333)" d="M0,335 70,330 80,410 60,430 10,400ZM35,500 130,455V550L40,540ZM145,520H215V600L170,650 145,650ZM180,725 207,720V765ZM425,730 460,700V780H425ZM355,1070 400,1055 475,1060V1105H355ZM880,1165H955L965,1200 955,1240H840V1215L880,1210ZM1390,810 1430,810 1470,860 1460,890 1310,895 1290,865 1380,840ZM905,355 940,275 960,290 940,360 970,385 920,375ZM690,300 770,345 700,330ZM155,905H180V925H155ZM715,1055H730V1080H705ZM810,940 840,930 830,970ZM1425,1160H1460V1200H1425ZM150,1300 185,1295V1325ZM765,1060 800,1060 780,1100ZM1120,1255 1140,1280 1125,1290ZM1125,1185H1150V1235H1125ZM1080,270 1115,265 1100,280ZM195,1165H203V1205H195ZM1380,1005 1420,1010 1385,1030ZM380,905H393V930H380Z"/>
<path transform="translate(120 540) scale(.33333)" d="M42,410 110,425V525H42ZM60,15H110V50H62ZM260,80H270V150L255,240 248,240ZM430,85 475,100 470,140 430,110ZM660,210 715,220 740,195 780,225 750,340 715,345 660,290ZM535,190 570,190 550,210ZM785,0H815V50L785,45ZM1060,95 1130,110 1080,125ZM475,850H520V968H430V945L375,955 380,930 430,905V870L475,875ZM285,690 305,720 335,735V773H282ZM430,740 460,700 450,660 480,700 490,760 430,750ZM1290,730 1330,710 1375,710V770L1365,815 1330,820 1295,800 1280,760ZM1445,515 1485,620 1420,625ZM1130,740 1180,650 1210,645 1160,750 1150,830 1180,900 1230,970 1150,950 1140,860 1125,780ZM905,730H970V750H905ZM820,580 870,590 845,670H810ZM680,590 750,570 760,660 745,620 680,610ZM770,1240 850,1240 860,1270 800,1265ZM1350,1160 1430,1215 1360,1200ZM1310,1400 1350,1385 1345,1430ZM1070,1420 1130,1360 1150,1380 1090,1440ZM610,530 645,505 650,540H612ZM425,530H437V595L425,590ZM965,490 990,480 1000,510 970,525ZM215,505 235,498 240,518ZM960,1130 975,1090 985,1140ZM90,350 115,350 105,370ZM310,615 340,620 320,630ZM580,905H600V930ZM665,830H680V860H668ZM1410,880 1440,890 1430,905ZM1010,1020 1040,1020 1050,1050 1015,1045ZM820,750 860,790 870,830 830,800ZM1100,300H1125V312H1100ZM550,270 578,270 560,285Z"/>
<path transform="translate(600 540) scale(.33333)" d="M395,0H540L490,100 450,160 400,190 370,190V120H400L405,60ZM0,510 45,590 40,625H0ZM160,470 210,480 205,500 165,505ZM350,560H405V620L360,640ZM410,415H440V440H410ZM520,190 610,190 615,220 590,290 540,260ZM580,300 640,300 640,340 620,360 590,360ZM455,250 490,260 490,300 460,290ZM905,780 960,780V810H1005V850L950,860 970,895 950,905 915,850ZM960,420 975,440 930,540 900,640V690L860,670 880,600 900,560 940,500ZM1050,590 1105,590 1110,680 1160,690 1110,710 1075,690ZM1090,745 1170,710 1260,715 1255,730 1180,720 1100,745ZM1080,520H1110V570H1080ZM1425,55H1500V140L1450,140 1420,120ZM1310,1150H1370V1180L1340,1190V1215H1310ZM480,1205H530V1270H480ZM470,1310 550,1300 570,1280 600,1280 560,1310 480,1330ZM630,1240 700,1220 720,1260 660,1290ZM585,790 610,800 655,880 640,890 610,840ZM480,880H520V900H480ZM395,870H420V900H395ZM320,740 360,780 350,810 320,800ZM355,945 420,940V970H355ZM110,740 160,738 140,752ZM250,1350 340,1310V1370L280,1370ZM370,1080 380,1060 410,1080 380,1140ZM250,740H278V760H250ZM1370,200H1385V235H1370ZM340,350H370V360H340ZM525,575 570,575 560,590 530,600ZM1330,530H1360V545H1330ZM1065,1405 1080,1395 1085,1415ZM45,1270 65,1310 50,1295ZM290,1190 325,1185 305,1200ZM190,1165 215,1160 205,1178ZM540,330 555,320 560,350ZM870,1350H895V1370H870ZM920,1290 895,1370 900,1310ZM1120,125H1138V145H1120ZM1340,600H1365V620H1340ZM800,520 805,600 820,600Z"/>
<path transform="translate(1080 540) scale(.33333)" d="M0,60H65V160L30,170 0,150ZM702,352 810,350 850,335 905,350V440L920,455 905,500 860,520 723,503V430H702ZM790,65H830V80L800,85ZM1120,310 1170,310 1160,345 1125,350ZM345,235 395,230 390,260 345,255ZM220,390H243V445H220ZM320,425H340V455H320ZM393,490H415V530H395ZM465,420H483V435H465ZM795,560H855V595L795,600ZM650,835 700,850 720,850V870L680,890 650,870ZM747,862 835,880 835,920 790,960 747,975 747,920ZM337,1145H470V1180L430,1185 420,1225 380,1240 337,1220ZM840,1250 880,1245 870,1280 840,1282ZM888,1262 930,1260V1295L890,1298ZM1265,245H1283V275H1265ZM1430,300 1480,290V320L1450,315ZM1015,450 1050,445 1050,475 1020,475ZM1040,510 1060,510V535H1042ZM890,107H980V118H890ZM1080,70H1110L1090,115 1075,110ZM1355,35H1375V80H1358ZM435,570 485,565 460,580ZM535,560 570,575 545,590ZM1075,410 1115,405 1100,425ZM1210,545 1230,535V550ZM1460,670 1480,650V685H1465ZM80,775 115,750 105,775ZM340,970H385V1000L350,1030ZM500,1060 515,1025 518,1055ZM665,1235H678V1258H665ZM390,340 425,350 410,360ZM205,570H225V590H205ZM650,380 670,380V390L655,395ZM955,265H977V285H955ZM0,1345H45V1380H0ZM312,778 338,765V782ZM1005,62H1030V75H1005ZM550,1270 600,1275 560,1290ZM110,318H130V332H110ZM175,140H200V180H180Z"/>
</g>
<g class="hill">
<path transform="translate(120 100) scale(.33333)" d="M1000,270 1060,330 1130,370 1050,350ZM1170,520 1280,590 1360,600 1430,560 1380,620 1300,640ZM1250,640 1350,680 1430,640 1500,690 1400,720 1330,740ZM1330,780 1440,740 1560,810 1640,910 1560,880 1500,810ZM1180,560 1240,680 1210,650ZM1600,900 1700,980 1780,1060 1820,1110 1740,1060 1650,980ZM1640,1050 1700,1120 1750,1180 1680,1120ZM1100,270 1140,300 1120,350ZM930,280 990,320 970,360Z"/>
</g>
<g class="school">
<path transform="translate(120 100) scale(.33333)" d="M530,740 590,720 620,725 610,770 530,782ZM650,715H680V735H650ZM895,815H915V865H900ZM505,935H560L600,915V935L560,950V985H505ZM435,1238H475V1345L425,1325ZM640,1180H680V1225H640ZM590,1030H615V1055H590ZM1060,1215H1080V1230H1060ZM990,942H1010V960H990ZM1128,1260H1150V1288H1128ZM152,1150H172V1172H152ZM780,1080H800V1100H780ZM900,1205H925V1225H900Z"/>
<path transform="translate(520 100) scale(.33333)" d="M510,625 590,665 545,700 510,680ZM430,440H455V470H430ZM1323,688H1343V723H1323ZM893,848H915V862H893ZM1025,800H1035V835H1025ZM1325,980H1345V1000H1325ZM1300,1340H1325V1355H1300ZM455,375H475V390H455ZM290,1250H310V1265H290ZM965,700H980V715H965ZM1235,920H1243V945H1235ZM845,655H868V668H845ZM1110,745H1120V785H1110ZM1070,1310H1085V1330H1070Z"/>
<path transform="translate(920 100) scale(.43367 .33333)" d="M96,690H110V723H96ZM287,830H303V865H287ZM742,940H758V985H742ZM505,1215H528V1235H505ZM1190,1175H1220V1205H1190ZM1325,1165H1350V1210H1325ZM785,1078H800V1100H785ZM1420,1255H1440V1280H1420ZM252,930H318V960H252ZM1048,1160H1065V1185H1048ZM280,1080H293V1100H280ZM435,1310H450V1345H435ZM1210,1340H1230V1360H1210ZM1235,980 1245,1010H1230ZM930,1080H945V1095H930Z"/>
<path transform="translate(120 540) scale(.33333)" d="M290,98H325V112H290ZM172,108H205V125H172ZM125,180H155V215H125ZM618,190H648V210H618ZM545,368H590V390H545ZM880,55H915V90H880ZM345,408H360V455H345ZM488,435H513V488H488ZM262,498H285V520H262ZM1357,435H1385V455H1357ZM1018,862H1055V905H1018ZM1078,890H1105V932H1078ZM585,1118H635V1165H590ZM1062,1065H1088V1085H1062ZM1203,1060H1225V1100H1203ZM705,1115H735V1135H705ZM1148,648H1170V690H1148ZM1328,1315H1358V1355H1328ZM950,625H970V655H950ZM75,0H100V12H75ZM545,672H565V690H545ZM760,225H790V235H760ZM940,180 965,200 950,200Z"/>
<path transform="translate(600 540) scale(.33333)" d="M217,990 300,985 305,1030 260,1070 217,1045ZM765,845H830V880L800,910 765,905ZM700,850H745V870H700ZM388,870H422V910H388ZM1030,1040H1055V1075H1030ZM500,978H522V992H500ZM1330,845H1360V870H1335ZM1400,600H1425V625H1400ZM1350,530H1370V548H1350ZM1420,1200H1470V1225L1420,1230ZM1035,75H1065V95H1035ZM235,815H265V832H235ZM508,1148H535V1170H508ZM25,1350H50V1368H25ZM710,785H730V803H710ZM1270,300H1300V320H1270ZM1295,400H1320V420H1295ZM975,650H995V670H975ZM1440,345H1455V375H1440Z"/>
<path transform="translate(1080 540) scale(.33333)" d="M598,70 633,45V125L600,120ZM830,45H860V80H830ZM1018,215H1055V245H1018ZM990,290H1055V315H990ZM1073,283H1112V308H1073ZM207,318H238V355H207ZM385,320H425V340L390,345ZM1205,582H1248V622H1205ZM1240,340H1265V362H1240ZM565,355H590V372H565ZM735,225H750V240H735ZM545,505H560V535H545ZM390,30H410V65H390ZM465,220H478V248H465ZM355,135H390V150H355ZM110,120H140V130H110ZM68,1020H100V1060H68ZM530,1270H595V1300H530ZM1385,1205H1405V1230H1385ZM765,1215H783V1235H765ZM315,650H328V670H315ZM700,772H712V780H700ZM1025,695H1050V715H1025ZM210,590 240,600V610H215ZM960,35H978V52H960ZM0,1200H30V1230H0ZM1420,1360H1450V1380H1420ZM190,440H202V455H190ZM530,1035H558V1050H530Z"/>
</g>
<g class="runway">
<path transform="translate(920 100) scale(.43367 .33333)" d="M205,400 430,560 490,565M215,380 465,540M205,400 220,375M370,375 260,545M345,385 245,545M350,385 575,535M375,385 575,520M455,465 510,520M430,595 460,555M260,490 350,500M275,380 290,420M255,375H310L330,400"/>
<path transform="translate(120 540) scale(.33333)" d="M445,1077H508"/>
</g>
<g class="mall"><path transform="translate(120 540) scale(.33333)" d="M1330,110H1375V135L1330,130Z"/><path transform="translate(120 100) scale(.33333)" d="M390,1060 440,1060 460,1100 430,1110Z"/><path transform="translate(1080 540) scale(.33333)" d="M315,90 375,90 330,110ZM340,1100H370L330,1120Z"/><path transform="translate(520 100) scale(.33333)" d="M1040,1000H1060V1060Z"/><path transform="translate(600 540) scale(.33333)" d="M1165,868H1188V892H1165Z"/></g>
<g class="water">
<path transform="translate(520 100) scale(.33333)" d="M70,258H95L145,278V330L105,350 130,420 190,460 230,490 300,540 395,570V600L450,640 500,690 540,705 600,692 660,740 725,795 720,812 680,790 600,730 570,745V770L640,820 720,865 800,905 830,940 850,990 900,1050 960,1095 1010,1150 1050,1220 1080,1240 1085,1290 1050,1390 1020,1390 1045,1320V1240L1000,1180 950,1130 920,1110 860,1070V1030L790,960 735,965 730,930 640,890 550,850 510,790 450,765 430,740V700L370,620 320,590 210,555 200,520 160,480 100,400 65,350ZM420,258H670V340L640,320 560,310 500,310ZM800,258H840L830,275ZM310,680 325,670V705ZM870,258 900,258 890,270ZM690,345 710,350 700,360Z"/>
<path transform="translate(920 100) scale(.43367 .33333)" d="M-120,258H470L610,310 700,350 800,385 900,430 1000,488 1100,510 1200,540 1270,560 1350,600 1420,625 1508,610V795L1430,805 1370,840 1290,852 1200,836 1100,818 970,790 840,742 760,680 700,630 640,560 580,500 520,450 440,400 380,350 300,325 190,315H0L-60,290ZM575,745 620,760 615,775 580,760ZM690,765 745,800 700,790ZM1310,880 1420,910 1430,960 1400,975 1310,950 1240,970 1230,960 1340,930ZM1355,1205H1395V1220L1385,1245 1345,1270 1340,1245 1355,1230ZM265,645 300,640 305,665 265,660ZM312,590H320V620ZM710,700 740,710 720,715Z"/>
<path transform="translate(600 540) scale(.33333)" d="M790,50H815L805,90 850,170 870,230 885,260 890,330 950,385 955,430 930,500 890,560 855,600 860,690 880,730 920,820 950,890 1000,940 1040,980 1030,1050 1010,1110 960,1160 940,1200V1290L925,1360 960,1400 1020,1440H970L895,1370 900,1290 910,1200 930,1150 980,1110 970,1040 1000,980 940,930 900,860 850,780 820,690 805,600 785,450 800,360 825,290 820,220 790,150 770,100ZM390,1440 420,1415 520,1370 600,1360 625,1315 720,1310 790,1310 850,1285V1320L780,1340 850,1350 830,1370 740,1350 640,1360 560,1400 470,1440ZM890,600Q890,555 925,552Q955,555 955,580Q945,620 920,622Q890,615 890,600ZM945,1305 960,1350 945,1345ZM1070,1000 1100,1050 1130,1065 1110,1065 1080,1030ZM1410,100H1427V130H1410ZM1440,100 1458,110 1450,125ZM30,525 55,520 40,540ZM1085,515H1100V560L1088,540ZM1050,620H1062V638H1050Z"/>
<path transform="translate(120 540) scale(.33333)" d="M1010,110 1060,97 1040,120ZM840,140 865,150 850,165ZM1020,1020 1060,1022 1100,1060 1080,1060 1050,1035ZM800,1120H825V1140L805,1145ZM1175,810 1195,785 1180,815ZM1475,525 1495,520 1480,540ZM135,1070 188,1080ZM675,1235 690,1232 685,1250ZM505,1365 520,1370V1385Z"/>
<path transform="translate(1080 540) scale(.33333)" d="M1150,75H1175L1180,100 1160,105ZM90,875 118,878 110,890 92,887ZM695,1440 720,1380 770,1440 750,1420 720,1400 700,1440ZM0,100 20,120 0,125Z"/>
<path transform="translate(120 100) scale(.33333)" d="M395,705 430,715 460,742 440,740ZM440,795 455,800 460,830 448,825ZM460,860 505,855V868L462,875ZM928,1070 945,1062 940,1100 928,1095Z"/>
</g>
<g class="stream net">
<path transform="translate(520 100) scale(.33333)" stroke-width="4" d="M430,265 520,310 620,330 680,370 770,395 880,440 960,475 1060,505 1130,505 1220,545 1290,480 1300,420 1295,370M1240,545 1320,590 1400,605 1480,600M1320,600 1400,630 1470,640M730,355 760,330 800,310 840,330 880,370M820,340 870,390M620,330 680,350 780,380"/>
<path transform="translate(920 100) scale(.43367 .33333)" stroke-width="4" d="M210,600 240,635 290,655 340,665 430,690M740,510 810,540M1430,640 1508,620"/>
<path transform="translate(120 540) scale(.33333)" stroke-width="2.5" d="M60,1340 100,1360 180,1380 250,1385 278,1410V1440M440,1430 470,1410 540,1400V1440"/>
<path transform="translate(120 540) scale(.33333)" stroke-width="1" d="M1215,650 1160,780 1155,850 1190,910M1230,575 1270,590 1320,620M1180,960 1260,1000"/>
<path transform="translate(600 540) scale(.33333)" stroke-width="1" d="M50,878 120,895 200,895"/>
</g>
<g fill="#bfe3a2">
<path transform="translate(920 100) scale(.43367 .33333)" d="M730,478 800,492 900,530 1000,562 1100,580 1200,630 1275,690 1280,720 1180,735 1100,740 1000,728 900,690 850,665 780,610 740,570 650,510 600,490 560,440 510,380 505,355 560,400 620,440 700,480ZM605,378 650,390 668,412 630,400ZM1140,775 1200,765 1300,770 1350,790 1310,810 1220,800Z"/>
</g>
<g fill="#eee9e3">
<path transform="translate(920 100) scale(.43367 .33333)" d="M1245,612 1280,625 1310,655 1280,648ZM1410,645 1480,650 1480,680 1508,685V698L1450,690Z"/>
<path transform="translate(600 540) scale(.33333)" d="M855,262 865,330 840,370 835,440 850,470 890,485 910,450 905,390 930,400 935,440 900,510 870,530 860,490 830,450 835,360Z"/>
</g>
<path transform="translate(600 540) scale(.33333)" d="M830,360 900,365 912,390 900,470 880,485 845,460 832,420Z" fill="#8accec"/>
<path transform="translate(600 540) scale(.33333)" d="M970,1040H982L995,1135H985Z" fill="#bfc1dc"/>
<path transform="translate(920 100) scale(.43367 .33333)" d="M975,615 995,600 1030,612 1070,652 1040,668 980,640ZM860,560 890,580 880,585ZM740,510 810,540 760,535Z" fill="#8accec"/>
<path class="border-halo" d="M1100,186 1206,217 1293,252 1380,277 1438,300 1497,345 1542,361 1574,354"/>
<path class="border" d="M1100,186 1206,217 1293,252 1380,277 1438,300 1497,345 1542,361 1574,354"/>
<use href="#minor" class="minor-case"/><use href="#major" class="major-case"/>
<use href="#minor" class="minor-fill"/><use href="#major" class="major-fill"/>
<use href="#trunk" class="motor-case"/><use href="#trunk" class="trunk-fill"/>
<use href="#motorway" class="motor-case"/><use href="#motorway" class="motor-fill"/>
<g class="area" transform="translate(-1 0)">
<text x="139" y="234.5" textLength="69">VETIA</text>
<text x="182" y="344" textLength="66">WEST</text><text x="177" y="370.3" textLength="77">UNION</text>
<text x="133" y="518" textLength="81">RENCO</text><text x="283" y="539.3" textLength="125">FIVE OAKS</text>
<text x="752" y="286.7" textLength="100">KENTON</text><text x="864" y="458" textLength="134">IRVINGTON</text>
<text x="1151" y="393.3" textLength="131">PARKROSE</text><text x="1432" y="416.7" textLength="139">INTERLACH</text>
<text x="1177" y="533" textLength="152">HAZELWOOD</text>
<text x="457" y="599" textLength="81">CEDAR</text><text x="463" y="625" textLength="69">HILLS</text>
<text x="577" y="617.7" textLength="66">WEST</text><text x="571" y="644" textLength="79">SLOPE</text>
<text x="460" y="737" textLength="62">VOSE</text><text x="317.5" y="789" textLength="96">SEXTON</text><text x="300" y="815" textLength="131">MOUNTAIN</text>
<text x="312" y="865" textLength="144">NEIGHBORS</text><text x="309" y="891.3" textLength="151">SOUTHWEST</text>
<text x="857" y="654" textLength="132">BROOKLYN</text><text x="954" y="712.3" textLength="154">WOODSTOCK</text><text x="727" y="721.3" textLength="137">HILLSDALE</text>
</g>
<g class="town">
<text x="257.500" y="659" textLength="74">Aloha</text><text x="529" y="923" textLength="85">Tigard</text>
<text x="891.500" y="861.7" textLength="133">Milwaukie</text><text x="781.500" y="964" textLength="170">Lake Oswego</text><text x="1195" y="856.3" textLength="161">Happy Valley</text>
<g class="small"><text x="225.500" y="953.3" textLength="73">Kinton</text><text x="134" y="1014.7" textLength="40">olls</text><text x="425" y="1036" textLength="102">King City</text><text x="1420" y="976" textLength="127">Damascus</text><text x="1103" y="1006" textLength="145" opacity=".85">Clackamas</text></g>
<g class="bold"><text x="408" y="689" textLength="142">Beaverton</text><text x="1484.500" y="607.3" textLength="98">Gresha</text></g>
<text class="city" x="779" y="554.3" textLength="155">Portland</text>
<text class="street"><textPath href="#marine" textLength="117">NE Marine Dr</textPath></text>
<text class="street" transform="translate(131 374) rotate(28)">wy</text>
<text class="forest" x="543.5" y="404" textLength="121">Forest Park</text>
</g>
<g class="tree"><path d="M594,365.500a5,5 0 0 1 1,-7.500a6.500,5.500 0 0 1 11,-3a5.500,5 0 0 1 7,5a4.500,4.500 0 0 1 -3,7.500q-3,1 -4.500,-1v5l2.500,3.500h-9l2.500,-3.500v-4.500q-4,2.500 -7.500,-1.500z"/></g>
<g class="shields">
<use href="#us" x="245.700" y="424"/><use href="#us" x="442" y="530"/><use href="#us" x="525" y="200"/>
<circle cx="1287" cy="218.700" r="19.200"/><circle cx="162" cy="828" r="19.200"/>
<use href="#interstate" x="829" y="203"/><use href="#interstate" x="769" y="787"/><use href="#interstate" x="652" y="907"/>
<use href="#interstate" x="1303" y="441"/><use href="#interstate" x="1120" y="477"/><use href="#interstate" x="1587" y="457"/>
<use href="#interstate" transform="translate(1172 901) scale(1.33 1)"/>
<text x="245.700" y="431">26</text><text x="442" y="537">26</text><text x="525" y="207.500">30</text><text x="1287" y="225.500">14</text><text x="162" y="834.500">10</text>
<g class="light"><text x="829" y="211">5</text><text x="769" y="795">5</text><text x="652" y="914.500">5</text><text x="1303" y="449">84</text><text x="1120" y="485">84</text><text x="1172" y="909" textLength="31">205</text></g>
</g>
<g class="logo">
<circle cx="169" cy="984.300" r="18.500"/>
<path d="M160,993V984A10,10 0 1 1 171,994Q165,996 160,993Z" fill="#928d88"/><path d="M171,976.500 172.700,981.500 177.500,983.300 172.700,985 171,990 169.300,985 164.500,983.300 169.300,981.500Z" fill="#fff"/>
<text x="195" y="993" textLength="121" lengthAdjust="spacingAndGlyphs">mapbox</text>
</g>
</svg>
<div class="attribution"><span>© Mapbox</span><span>© OpenStreetMap</span><strong>Improve this map</strong></div>
</div>
</section>
<section class="search">
<h1>Search-A-Place</h1>
<p class="hint">Type slow, the APIs are thinking...</p>
<div class="actions"><button class="submit" type="button">Submit</button><button class="reset" type="button">Reset</button></div>
<input class="location" type="text" placeholder="Enter a location..." aria-label="Location">
</section>
</main>
</body>
</html>
```
FILE: styles.css
```css
* { box-sizing: border-box; }
body { margin: 0; background: #3c4952; font-family: "Liberation Sans", Arial, sans-serif; overflow: hidden; }
.page { display: grid; grid-template-columns: 1440px 1fr; height: 1348px; padding-left: 134px; }
.map-column { padding-top: 118px; }
.coordinates { width: 712px; height: 54px; margin-left: 400px; border-radius: 8px; background: #698193; color: #fff; font-size: 30px; line-height: 56px; text-align: center; box-shadow: 2px 2px 8px 1px #111c; }
.map { position: relative; width: 1440px; height: 834px; margin-top: 14px; border-radius: 8px; overflow: hidden; box-shadow: 4px 4px 12px #000c; }
.map-canvas { display: block; width: 1440px; height: 834px; }
.net path { vector-effect: non-scaling-stroke; }
.net, .minor-case, .minor-fill, .major-case, .major-fill, .motor-case, .motor-fill, .trunk-fill { fill: none; stroke-linecap: round; stroke-linejoin: round; }
.minor-case { stroke: #dadbe8; stroke-width: 5px; }
.minor-fill { stroke: #fff; stroke-width: 2.4px; }
.major-case { stroke: #dadbe8; stroke-width: 7.5px; }
.major-fill { stroke: #fff; stroke-width: 4.6px; }
.motor-case { stroke: #fff; stroke-width: 7px; }
.motor-fill { stroke: #f4a668; stroke-width: 4.8px; }
.trunk-fill { stroke: #efd173; stroke-width: 4.2px; }
.shade { fill: #e6e1d7; }
.park { fill: #bfe3a2; }
.soft-park { fill: #d7e2bf; }
.hill { fill: #a9ca87; opacity: .45; }
.school { fill: #e5dfbd; }
.mall { fill: #e6d5dc; }
.water { fill: #8accec; }
.stream { stroke: #8accec; }
.runway { fill: none; stroke: #c7c9dd; stroke-width: 8; }
.border { fill: none; stroke: #8d9bb0; stroke-width: 2.2; stroke-dasharray: 10 4; }
.border-halo { fill: none; stroke: #9dcae2; stroke-width: 9; }
.tree { fill: #47812a; stroke: #fff; stroke-width: 2; paint-order: stroke; }
.map-canvas text { font-family: Roboto, sans-serif; paint-order: stroke; stroke: #fffc; stroke-width: 3.5px; stroke-linejoin: round; }
.area text { font-size: 22px; fill: #58618c; }
.town text { font-size: 28px; fill: #111; }
.town .small text { font-size: 26px; }
.town .bold text { font-size: 30px; font-weight: 500; fill: #000; }
.town .city { font-size: 40px; font-weight: 500; fill: #000; }
.town .street { font-size: 20px; }
.town .forest { font-size: 22px; font-weight: 500; fill: #416f26; }
.shields circle { fill: #fff; stroke: #222; stroke-width: 2; }
.shields text { font-size: 19px; font-weight: 700; text-anchor: middle; fill: #1c1c1c; stroke: none; letter-spacing: .5px; }
.shields .light text { fill: #fff; font-size: 18px; }
.logo circle { fill: #fff; stroke: #928d88; stroke-width: 2.5; }
.logo text { font-family: Lato, sans-serif; font-size: 30px; font-weight: 700; fill: #fff; stroke: #928d88; stroke-width: 5px; }
.attribution { position: absolute; right: 0; bottom: 0; display: flex; gap: 11px; height: 40px; padding: 0 10px; background: #ffffff80; color: #404040; font-size: 24px; line-height: 40px; white-space: nowrap; }
.attribution span:first-child { margin-right: 2px; }
.search { display: flex; flex-direction: column; align-items: center; padding-right: 50px; }
h1 { margin: 223px 0 0; padding-left: 8px; color: #e0dfdc; font-size: 120px; line-height: 138px; letter-spacing: 12px; white-space: nowrap;
  text-shadow: 0 -2px 0 #fff, 0 2px 0 #2e2e2e, 0 4px 0 #2c2c2c, 0 6px 0 #2a2a2a, 0 8px 0 #282828, 0 10px 0 #262626, 0 12px 0 #242424, 0 14px 0 #222, 0 16px 0 #202020, 0 18px 0 #1e1e1e, 0 20px 0 #1c1c1c, 0 22px 0 #1a1a1a, 0 24px 0 #181818, 0 26px 0 #161616, 0 28px 0 #141414, 0 30px 0 #121212, 0 44px 60px rgba(0,0,0,.4), 0 44px 20px rgba(0,0,0,.3); }
.hint { margin: 122px 0 0 5px; color: #9da2a8; font-size: 33.2px; font-weight: 700; line-height: 36px; text-shadow: 2px 4px 6px #0006; }
.actions { display: flex; gap: 58px; margin-top: 57px; margin-left: 4px; }
button { height: 90px; padding: 2px 0 0; border: 0; border-radius: 10px; color: #fff; font-family: Inter, sans-serif; font-size: 38.5px; letter-spacing: .2px; text-shadow: 2px 4px 6px #0009; box-shadow: 2px 3px 10px 1px #000c; }
.submit { width: 372px; background: #60c47a; }
.reset { width: 346px; background: #ea463e; }
.location { width: 844px; height: 90px; margin-top: 56px; padding: 3px 22px 0; border: 0; background: #698193; color: #fff; font-family: Inter, sans-serif; font-size: 38.3px; }
.location::placeholder { color: #fff; opacity: 1; }
```
